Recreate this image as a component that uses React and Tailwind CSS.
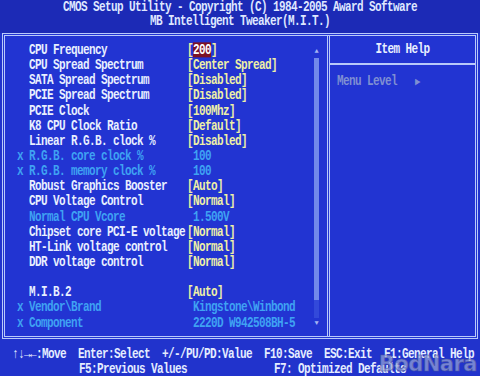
import React from 'react';

const rows = [
    { label: 'CPU Frequency', value: '200', sel: true },
    { label: 'CPU Spread Spectrum', value: '[Center Spread]' },
    { label: 'SATA Spread Spectrum', value: '[Disabled]' },
    { label: 'PCIE Spread Spectrum', value: '[Disabled]' },
    { label: 'PCIE Clock', value: '[100Mhz]' },
    { label: 'K8 CPU Clock Ratio', value: '[Default]' },
    { label: 'Linear R.G.B. clock %', value: '[Disabled]' },
    { label: 'R.G.B. core clock %', value: ' 100', off: true, x: true },
    { label: 'R.G.B. memory clock %', value: ' 100', off: true, x: true },
    { label: 'Robust Graphics Booster', value: '[Auto]' },
    { label: 'CPU Voltage Control', value: '[Normal]' },
    { label: 'Normal CPU Vcore', value: ' 1.500V', off: true },
    { label: 'Chipset core PCI-E voltage', value: '[Normal]' },
    { label: 'HT-Link voltage control', value: '[Normal]' },
    { label: 'DDR voltage control', value: '[Normal]' },
    null,
    { label: 'M.I.B.2', value: '[Auto]' },
    { label: 'Vendor\\Brand', value: ' Kingstone\\Winbond', off: true, x: true },
    { label: 'Component', value: ' 2220D W942508BH-5', off: true, x: true },
];

// BIOS glyphs are taller than a normal mono font, stretch them a bit
const tall = 'scale-y-[1.25]';

const Row = ({ row }) => {
    if (!row) return <div className="h-[15.15px]" />;
    return (
        <div className={`flex h-[15.15px] items-center whitespace-pre ${tall}`}>
            <span className="w-[12px] text-[#3fa2f2]">{row.x ? 'x' : ''}</span>
            <span className={`w-[158px] ${row.off ? 'text-[#3fa2f2]' : 'text-[#e8efff]'}`}>
                {row.label}
            </span>
            {row.sel ? (
                <span className="text-[#eef0a6]">
                    [<span className="bg-[#7c1226] text-white">{row.value}</span>]
                </span>
            ) : (
                <span className={row.off ? 'text-[#3fa2f2]' : 'text-[#eef0a6]'}>{row.value}</span>
            )}
        </div>
    );
};

export default function App() {
    return (
        <div
            className="relative w-[480px] h-[376px] overflow-hidden bg-[#2133cc] text-[11px] font-bold tracking-[-0.6px] leading-[15px]"
            style={{ fontFamily: '"Liberation Mono", "DejaVu Sans Mono", monospace' }}
        >
            {/* Title */}
            <div className="h-[33px] bg-[#1c2ab6] text-center text-[#dfe7ff] leading-[14px] whitespace-pre">
                <div className={tall}>CMOS Setup Utility - Copyright (C) 1984-2005 Award Software</div>
                <div className={tall}>MB Intelligent Tweaker(M.I.T.)</div>
            </div>

            {/* Main frame */}
            <div className="mx-[2px] h-[306px] flex border-[3px] border-double border-[#b9c9fa] bg-[#2234d2]">
                {/* Left: settings */}
                <div className="flex w-[322px]">
                    <div className="flex-1 pl-[12px] pt-[7px]">
                        {rows.map((row, i) => (
                            <Row key={i} row={row} />
                        ))}
                    </div>
                    <div className="w-[5px] mr-[8px] flex flex-col items-center pt-[10px]">
                        <div className="h-[10px] text-[7px] leading-[10px] text-[#a6b4f2] tracking-normal">▲</div>
                        <div className="mt-[2px] h-[242px] w-[5px] bg-[#7389ea]" />
                        <div className="h-[18px] w-[5px] bg-[#3349da]" />
                        <div className="h-[10px] text-[7px] leading-[10px] text-[#a6b4f2] tracking-normal">▼</div>
                    </div>
                </div>

                {/* Right: item help */}
                <div className="flex-1 flex flex-col border-l-[3px] border-double border-[#b9c9fa]">
                    <div className="h-[29px] flex items-center justify-center border-b-2 border-[#b9c9fa] text-[#e8efff]">
                        <span className={tall}>Item Help</span>
                    </div>
                    <div className={`pl-[7px] pt-[8px] text-[#7f8fd2] whitespace-pre ${tall}`}>
                        Menu Level   <span className="text-[9px]">▶</span>
                    </div>
                </div>
            </div>

            {/* Key help */}
            <div className="pt-[8px] text-[#e4ecff] whitespace-pre">
                <div className={`pl-[12px] ${tall}`}>↑↓→←:Move  Enter:Select  +/-/PU/PD:Value  F10:Save  ESC:Exit  F1:General Help</div>
                <div className={`flex pl-[79px] ${tall}`}>
                    <span className="w-[195px]">F5:Previous Values</span>
                    <span>F7: Optimized Defaults</span>
                </div>
            </div>

            {/* photo watermark */}
            <div
                className="absolute right-[3px] bottom-[1px] text-[21px] font-bold tracking-[-0.5px] leading-[22px] text-[#9ca8d8]/70"
                style={{ fontFamily: '"DejaVu Sans", sans-serif', WebkitTextStroke: '0.6px #4a56a0' }}
            >
                BodNara
            </div>
        </div>
    );
}
